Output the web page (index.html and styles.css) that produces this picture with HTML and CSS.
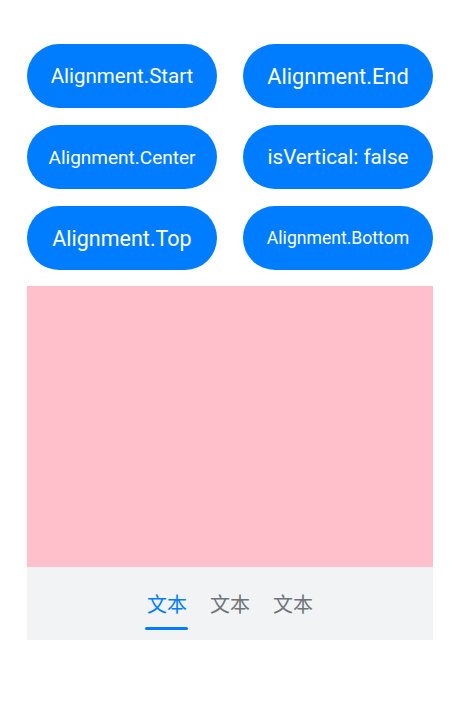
FILE: index.html
```html
<!DOCTYPE html>
<html>
<head>
<meta charset="utf-8">
<link rel="stylesheet" href="styles.css">
</head>
<body>
<div class="page">
  <div class="grid">
    <div class="btn s-start">Alignment.Start</div>
    <div class="btn s-end">Alignment.End</div>
    <div class="btn s-center">Alignment.Center</div>
    <div class="btn s-vert">isVertical: false</div>
    <div class="btn s-top">Alignment.Top</div>
    <div class="btn s-bottom">Alignment.Bottom</div>
  </div>
  <div class="tabs">
    <div class="content"></div>
    <div class="bar">
      <div class="tab active">文本<span class="line"></span></div>
      <div class="tab">文本</div>
      <div class="tab">文本</div>
    </div>
  </div>
</div>
</body>
</html>
```
FILE: styles.css
```css
html, body { margin: 0; padding: 0; background: #fff; }
.page { padding: 44px 28px 0 27px; font-family: Roboto, "Noto Sans CJK SC", sans-serif; }
.grid { display: grid; grid-template-columns: 190px 190px; column-gap: 26px; row-gap: 17px; }
.btn { height: 64px; border-radius: 32px; background: #007dff; color: #fff; display: flex; align-items: center; justify-content: center; }
.s-start { font-size: 20.5px; }
.s-end { font-size: 21.8px; }
.s-center { font-size: 19px; }
.s-vert { font-size: 20.7px; }
.s-top { font-size: 21.5px; }
.s-bottom { font-size: 17.6px; }
.tabs { margin-top: 16px; width: 406px; }
.content { height: 281px; background: #ffc0cb; }
.bar { height: 73px; background: #f1f3f5; display: flex; justify-content: center; gap: 23px; }
.tab { position: relative; font-family: "Noto Sans CJK SC", sans-serif; font-size: 20px; line-height: 28px; padding-top: 23px; color: #6f7478; }
.tab.active { color: #007dff; }
.line { position: absolute; left: -2px; right: -1px; top: 60px; height: 3px; border-radius: 2px; background: #007dff; }
```
